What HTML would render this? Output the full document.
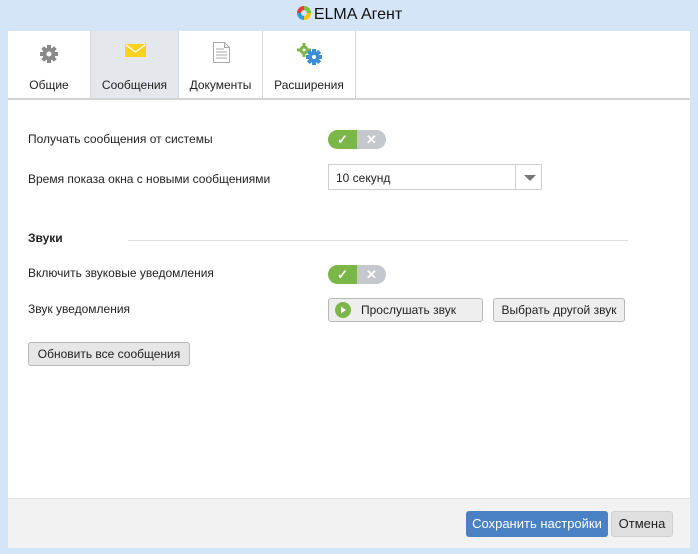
<!DOCTYPE html>
<html><head><meta charset="utf-8"><style>
*{box-sizing:border-box;margin:0;padding:0}
body{width:698px;height:554px;background:#d5e5f8;font-family:"Liberation Sans",sans-serif;font-size:12px;color:#222;position:relative;overflow:hidden}
.abs{position:absolute}
.title{left:0;top:5px;width:698px;text-align:center;font-size:16px;color:#111}
.panel{left:8px;top:31px;width:682px;height:517px;background:#fff}
.tab{top:0;height:67px;border-right:1px solid #d8d8d8;text-align:center}
.tab span{position:absolute;left:0;right:0;top:47px}
.line{left:0;top:67px;width:682px;height:2px;background:#d3d3d3}
.tog{width:58px;height:19px;border-radius:10px;overflow:hidden;display:flex}
.tog div{width:29px;height:19px;display:flex;align-items:center;justify-content:center;color:#fff;font-size:13px;font-weight:bold}
.btn{border:1px solid #b8b8b8;border-radius:3px;background:#eee;height:24px;line-height:22px;text-align:center}
.footer{left:0;top:467px;width:682px;height:50px;background:#f2f2f2;border-top:1px solid #e2e2e2}
</style></head><body>
<div class="abs title"><svg width="16" height="16" style="vertical-align:-2px;margin-right:2px" viewBox="0 0 16 16"><path d="M8 1A7 7 0 0 0 1 8h4a3 3 0 0 1 3-3z" fill="#ef3b2d"/><path d="M1 8a7 7 0 0 0 7 7v-4a3 3 0 0 1-3-3z" fill="#2a9fe0"/><path d="M8 15a7 7 0 0 0 7-7h-4a3 3 0 0 1-3 3z" fill="#ffc400"/><path d="M15 8A7 7 0 0 0 8 1v4a3 3 0 0 1 3 3z" fill="#7cc242"/></svg>ELMA Агент</div>
<div class="abs panel">
 <div class="abs tab" style="left:0;width:83px"><svg class="abs" style="left:31px;top:13px" width="20" height="20" viewBox="0 0 20 20"><g fill="#8a8a8a"><circle cx="10" cy="10" r="6.5"/><rect x="8" y="1" width="4" height="18"/><rect x="1" y="8" width="18" height="4"/><rect x="8" y="1" width="4" height="18" transform="rotate(45 10 10)"/><rect x="8" y="1" width="4" height="18" transform="rotate(-45 10 10)"/></g><circle cx="10" cy="10" r="2.5" fill="#fff"/></svg><span>Общие</span></div>
 <div class="abs tab" style="left:83px;width:88px;background:#e4e8ec"><svg class="abs" style="left:34px;top:13px" width="21" height="13" viewBox="0 0 21 13"><rect width="21" height="13" rx="1" fill="#fcd21c"/><path d="M1 1l9.5 7L20 1" stroke="#fff" stroke-width="1.3" fill="none"/></svg><span>Сообщения</span></div>
 <div class="abs tab" style="left:171px;width:84px"><svg class="abs" style="left:34px;top:11px" width="17" height="21" viewBox="0 0 17 21"><path d="M.5.5h11l5 5v15H.5z" fill="#fff" stroke="#aaa"/><path d="M11.5.5v5h5" fill="none" stroke="#aaa"/><path d="M3 7h8M3 10h11M3 13h11M3 16h11" stroke="#aaa"/></svg><span>Документы</span></div>
 <div class="abs tab" style="left:255px;width:93px"><svg class="abs" style="left:34px;top:12px" width="26" height="22" viewBox="0 0 26 22"><g fill="#7ab648"><circle cx="7" cy="7" r="4.5"/><rect x="5.5" y="0" width="3" height="14"/><rect x="0" y="5.5" width="14" height="3"/></g><circle cx="7" cy="7" r="1.5" fill="#fff"/><g fill="#3a8fd6"><circle cx="17" cy="14" r="5.5"/><rect x="15" y="6" width="4" height="16"/><rect x="9" y="12" width="16" height="4"/><rect x="15" y="6" width="4" height="16" transform="rotate(45 17 14)"/><rect x="15" y="6" width="4" height="16" transform="rotate(-45 17 14)"/></g><circle cx="17" cy="14" r="2" fill="#fff"/></svg><span>Расширения</span></div>
 <div class="abs line"></div>
 <div class="abs" style="left:20px;top:101px">Получать сообщения от системы</div>
 <div class="abs tog" style="left:320px;top:99px"><div style="background:#7ab648">✓</div><div style="background:#c4c8cc">✕</div></div>
 <div class="abs" style="left:20px;top:141px">Время показа окна с новыми сообщениями</div>
 <div class="abs" style="left:320px;top:133px;width:214px;height:26px;border:1px solid #d0d0d0"><div class="abs" style="left:7px;top:6px">10 секунд</div><div class="abs" style="left:186px;top:0;width:1px;height:24px;background:#d0d0d0"></div><div class="abs" style="left:195px;top:10px;width:0;height:0;border-left:6px solid transparent;border-right:6px solid transparent;border-top:6px solid #777"></div></div>
 <div class="abs" style="left:20px;top:200px;font-weight:bold">Звуки</div>
 <div class="abs" style="left:120px;top:209px;width:500px;height:1px;background:#ddd"></div>
 <div class="abs" style="left:20px;top:235px">Включить звуковые уведомления</div>
 <div class="abs tog" style="left:320px;top:234px"><div style="background:#7ab648">✓</div><div style="background:#c4c8cc">✕</div></div>
 <div class="abs" style="left:20px;top:271px">Звук уведомления</div>
 <div class="abs btn" style="left:320px;top:267px;width:155px;text-align:left;padding-left:32px"><svg class="abs" style="left:6px;top:3px" width="16" height="16"><circle cx="8" cy="8" r="8" fill="#7ab648"/><path d="M6 4.5l5 3.5-5 3.5z" fill="#fff"/></svg>Прослушать звук</div>
 <div class="abs btn" style="left:485px;top:267px;width:132px">Выбрать другой звук</div>
 <div class="abs btn" style="left:20px;top:311px;width:162px;background:#e6e6e6">Обновить все сообщения</div>
 <div class="abs footer">
  <div class="abs btn" style="left:458px;top:12px;width:142px;height:26px;line-height:26px;background:#4a80c4;border:none;color:#fff;font-size:13px">Сохранить настройки</div>
  <div class="abs btn" style="left:603px;top:12px;width:62px;height:26px;line-height:24px;background:#e0e0e0;border-color:#d0d0d0;font-size:13px">Отмена</div>
 </div>
</div>
</body></html>
